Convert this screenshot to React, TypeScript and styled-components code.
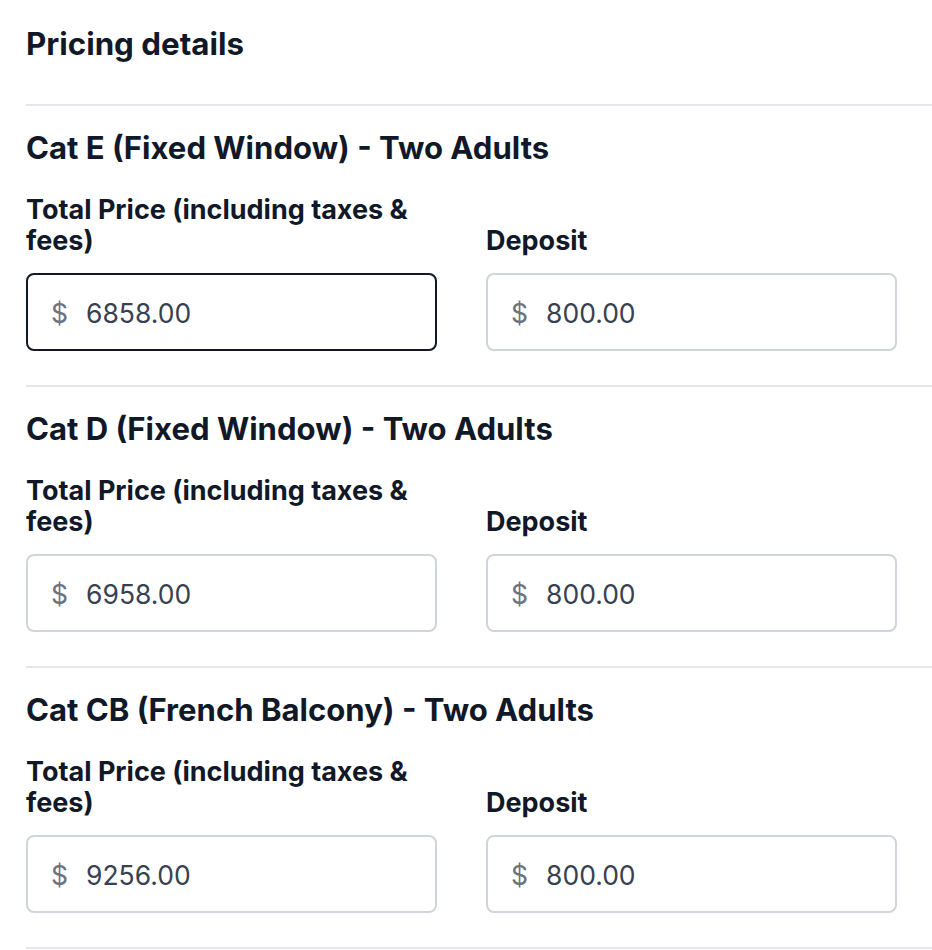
import React from "react";
import styled, { createGlobalStyle } from "styled-components";

const Global = createGlobalStyle`
  html, body { margin: 0; padding: 0; background: #ffffff; }
  body { font-family: Inter, "Noto Sans", sans-serif; color: #111827; }
  * { box-sizing: border-box; }
`;

const Page = styled.div`
  padding: 24px 0 0 26px;
`;

const Heading = styled.h2`
  margin: 0 0 40px 0;
  font-size: 31.3px;
  line-height: 40px;
  font-weight: 700;
  color: #111827;
`;

const Section = styled.section`
  border-top: 2px solid #e5e7eb;
  padding: 22px 0 34px 0;
  &:last-child { border-bottom: 2px solid #e5e7eb; }
`;

const SectionTitle = styled.h3`
  margin: 0 0 26px 0;
  font-size: 31.1px;
  line-height: 40px;
  font-weight: 700;
  color: #111827;
`;

const Grid = styled.div`
  display: grid;
  grid-template-columns: 411px 411px;
  column-gap: 49px;
  align-items: end;
`;

const Field = styled.div`
  display: flex;
  flex-direction: column;
`;

const Label = styled.label`
  font-size: 27px;
  line-height: 31px;
  font-weight: 700;
  color: #111827;
  margin-bottom: 17px;
`;

const InputBox = styled.div<{ $focused?: boolean }>`
  height: 78px;
  border: 2px solid ${(p) => (p.$focused ? "#111827" : "#d1d5db")};
  border-radius: 8px;
  display: flex;
  align-items: center;
  padding: 1px 0 0 23px;
  font-size: 26.5px;
`;

const Prefix = styled.span`
  color: #6b7280;
  margin-right: 18px;
`;

const Value = styled.span`
  color: #374151;
`;

const cabins = [
  { title: "Cat E (Fixed Window) - Two Adults", total: "6858.00", deposit: "800.00", focused: true },
  { title: "Cat D (Fixed Window) - Two Adults", total: "6958.00", deposit: "800.00" },
  { title: "Cat CB (French Balcony) - Two Adults", total: "9256.00", deposit: "800.00" },
];

export default function App() {
  return (
    <>
      <Global />
      <Page>
        <Heading>Pricing details</Heading>
        {cabins.map((c) => (
          <Section key={c.title}>
            <SectionTitle>{c.title}</SectionTitle>
            <Grid>
              <Field>
                <Label>Total Price (including taxes &amp; fees)</Label>
                <InputBox $focused={c.focused}>
                  <Prefix>$</Prefix>
                  <Value>{c.total}</Value>
                </InputBox>
              </Field>
              <Field>
                <Label>Deposit</Label>
                <InputBox>
                  <Prefix>$</Prefix>
                  <Value>{c.deposit}</Value>
                </InputBox>
              </Field>
            </Grid>
          </Section>
        ))}
      </Page>
    </>
  );
}
